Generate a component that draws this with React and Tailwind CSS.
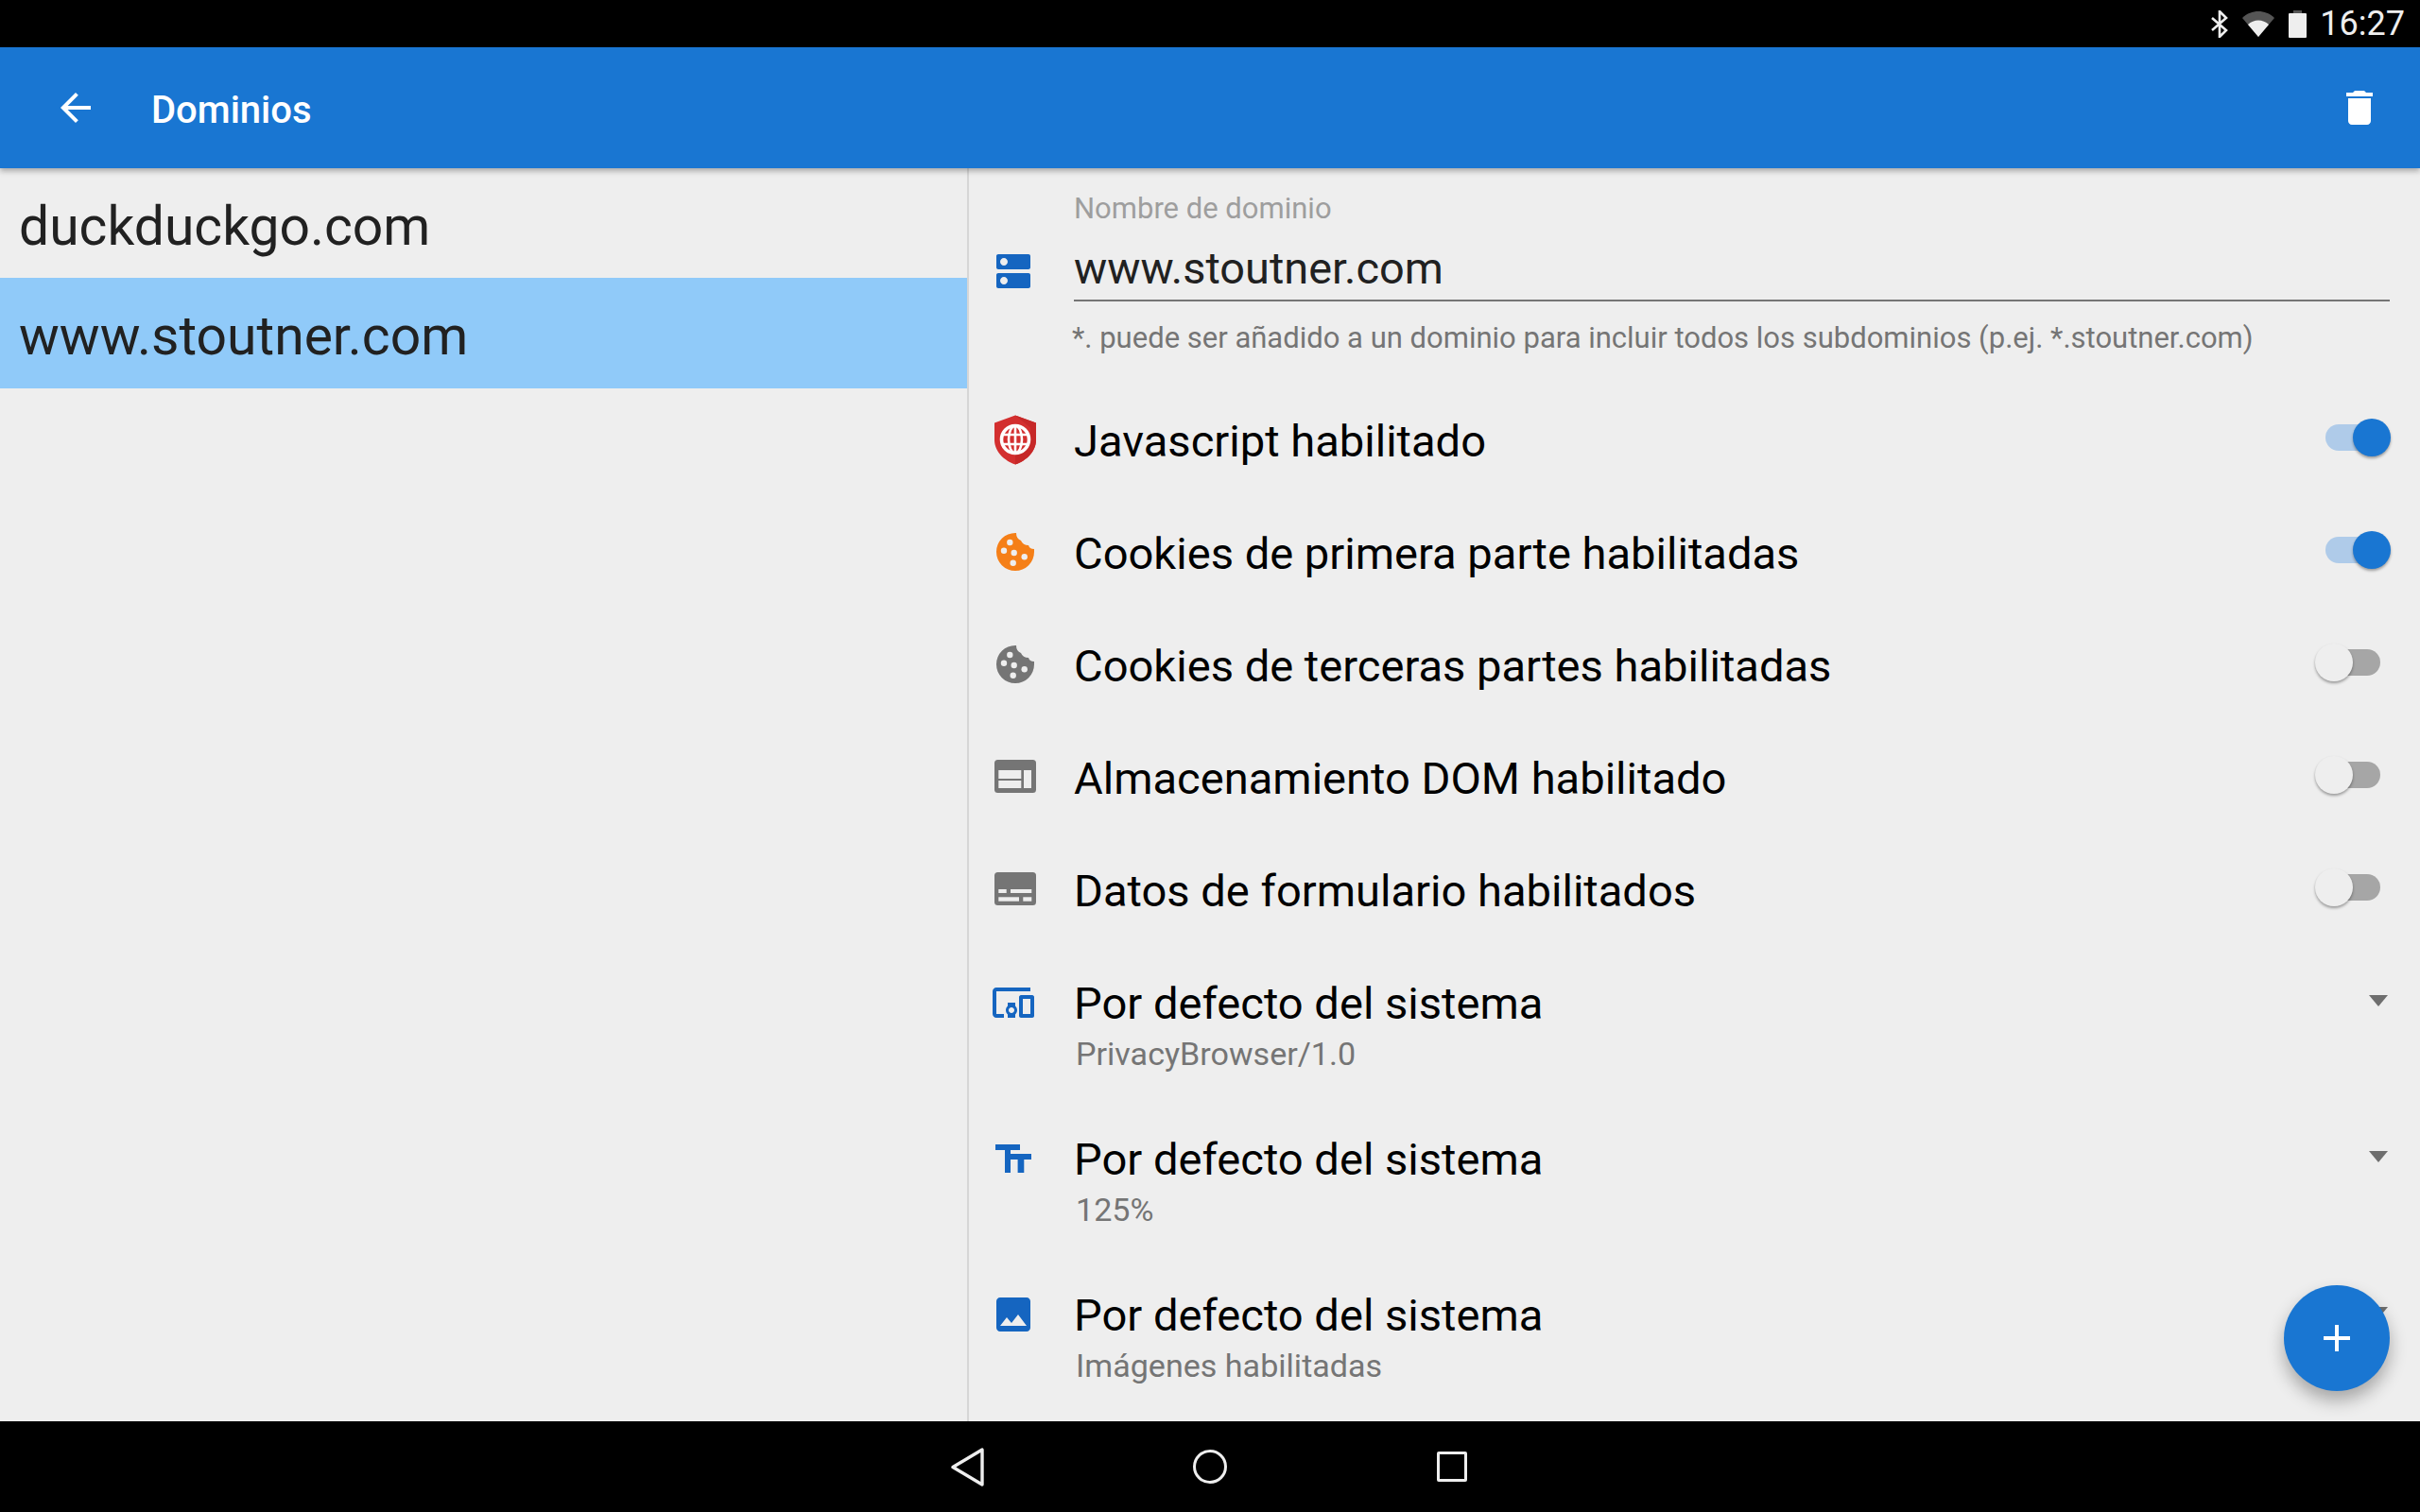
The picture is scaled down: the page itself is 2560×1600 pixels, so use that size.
function DnsIcon() {
    return (
        <svg viewBox="0 0 24 24" className="h-12 w-12" fill="#1565c0">
            <path d="M20 13H4c-.55 0-1 .45-1 1v6c0 .55.45 1 1 1h16c.55 0 1-.45 1-1v-6c0-.55-.45-1-1-1zM7 19c-1.1 0-2-.9-2-2s.9-2 2-2 2 .9 2 2-.9 2-2 2zM20 3H4c-.55 0-1 .45-1 1v6c0 .55.45 1 1 1h16c.55 0 1-.45 1-1V4c0-.55-.45-1-1-1zM7 9c-1.1 0-2-.9-2-2s.9-2 2-2 2 .9 2 2-.9 2-2 2z" />
        </svg>
    );
}

function ShieldIcon() {
    return (
        <svg viewBox="-2 -0.5 48 56" className="h-14 w-12">
            <path d="M24 2 L46 10 V28 C46 40 36 50 24 54 C12 50 2 40 2 28 V10 Z" fill="#d32f2f" />
            <path d="M24 2 L46 10 V28 C46 40 36 50 24 54 L24 42 L40 32 V15 Z" fill="#c62828" />
            <circle cx="24" cy="27.5" r="14.5" fill="none" stroke="#fff" strokeWidth="3.6" />
            <ellipse cx="24" cy="27.5" rx="7" ry="14.5" fill="none" stroke="#fff" strokeWidth="2.6" />
            <path d="M24 13v29M10 22.5h28M10 32.5h28" stroke="#fff" strokeWidth="2.6" fill="none" />
        </svg>
    );
}

function CookieIcon({ color }) {
    return (
        <svg viewBox="-2 0 48 48" className="h-12 w-12">
            <path d="M24 4 A20 20 0 1 0 44 24 L44 21 Q39 21 38 17 Q32 17 30 12 Q25 10 25 4 Z" fill={color} />
            <g fill="#eeeeee">
                <circle cx="18.3" cy="14" r="3.2" />
                <circle cx="12" cy="22.7" r="3.2" />
                <circle cx="22.7" cy="25" r="3.2" />
                <circle cx="33.7" cy="29.3" r="3.2" />
                <circle cx="21.7" cy="35.7" r="3.2" />
            </g>
        </svg>
    );
}

function StorageIcon() {
    return (
        <svg viewBox="-4 -6 48 48" className="h-12 w-12">
            <rect width="44" height="35" rx="3.5" fill="#757575" />
            <g fill="#eeeeee">
                <rect x="4.3" y="11" width="24" height="9" />
                <rect x="4.3" y="22" width="24" height="8" />
                <rect x="31" y="11" width="8" height="19" />
            </g>
        </svg>
    );
}

function FormIcon() {
    return (
        <svg viewBox="-4 -6 48 48" className="h-12 w-12">
            <rect width="44" height="35" rx="3.5" fill="#757575" />
            <g fill="#eeeeee">
                <rect x="4.3" y="18" width="8.4" height="4" />
                <rect x="17" y="18" width="22.3" height="4" />
                <rect x="4.3" y="26.3" width="21.7" height="4.4" />
                <rect x="30.3" y="26.3" width="9" height="4.4" />
            </g>
        </svg>
    );
}

function DevicesIcon() {
    return (
        <svg viewBox="0 0 24 24" className="h-12 w-12" fill="#1565c0">
            <path d="M3 6h18V4H3c-1.1 0-2 .9-2 2v12c0 1.1.9 2 2 2h4v-2H3V6zm10 6H9v1.78c-.61.55-1 1.33-1 2.22s.39 1.67 1 2.22V20h4v-1.78c.61-.55 1-1.34 1-2.22s-.39-1.67-1-2.22V12zm-2 5.5c-.83 0-1.5-.67-1.5-1.5s.67-1.5 1.5-1.5 1.5.67 1.5 1.5-.67 1.5-1.5 1.5zM22 8h-6c-.5 0-1 .5-1 1v10c0 .5.5 1 1 1h6c.5 0 1-.5 1-1V9c0-.5-.5-1-1-1zm-1 10h-4v-8h4v8z" />
        </svg>
    );
}

function TextSizeIcon() {
    return (
        <svg viewBox="-5 -9 48 48" className="h-12 w-12" fill="#1565c0">
            <path d="M0 0h26v6H16v24h-6V6H0z" />
            <path d="M16 10h22v6h-7.7v14h-6.7V16H16z" />
        </svg>
    );
}

function ImageIcon() {
    return (
        <svg viewBox="0 0 24 24" className="h-12 w-12" fill="#1565c0">
            <path d="M21 19V5c0-1.1-.9-2-2-2H5c-1.1 0-2 .9-2 2v14c0 1.1.9 2 2 2h14c1.1 0 2-.9 2-2zM8.5 13.5l2.5 3.01L14.5 12l4.5 6H5l3.5-4.5z" />
        </svg>
    );
}

function Toggle({ on }) {
    return (
        <div className={`relative mb-[3px] h-7 w-[58px] rounded-full ${on ? "bg-[#afcbe9]" : "bg-[#a6a6a6]"}`}>
            <div
                className={`absolute -top-1.5 h-10 w-10 rounded-full shadow-[0_2px_3px_rgba(0,0,0,0.35)] ${on ? "-right-[11px] bg-[#1976d2]" : "-left-[11px] bg-[#eeeeee]"}`}
            />
        </div>
    );
}

function ToggleRow({ icon, label, on }) {
    return (
        <div className="flex h-[119px] items-center pl-[23px] pr-[42px]">
            <div className="mr-10 flex h-12 w-12 items-center justify-center">{icon}</div>
            <span className="flex-1 pt-[5px] text-[47.1px] leading-none text-black">{label}</span>
            <Toggle on={on} />
        </div>
    );
}

function SpinnerRow({ icon, sub }) {
    return (
        <div className="flex h-[165px] items-start pl-[23px] pr-[34px] pt-9">
            <div className="mr-10 mt-px h-12 w-12">{icon}</div>
            <div className="flex-1">
                <p className="text-[47.1px] leading-[52px] text-black">Por defecto del sistema</p>
                <p className="mt-[2px] pl-[2px] text-[34.1px] leading-[50px] text-[#757575]">{sub}</p>
            </div>
            <div className="mt-[17px] h-0 w-0 border-x-[10px] border-t-[12px] border-x-transparent border-t-[#6e6e6e]" />
        </div>
    );
}

const toggles = [
    { label: "Javascript habilitado", on: true, icon: <ShieldIcon /> },
    { label: "Cookies de primera parte habilitadas", on: true, icon: <CookieIcon color="#f57f17" /> },
    { label: "Cookies de terceras partes habilitadas", on: false, icon: <CookieIcon color="#757575" /> },
    { label: "Almacenamiento DOM habilitado", on: false, icon: <StorageIcon /> },
    { label: "Datos de formulario habilitados", on: false, icon: <FormIcon /> },
];

const spinners = [
    { sub: "PrivacyBrowser/1.0", icon: <DevicesIcon /> },
    { sub: "125%", icon: <TextSizeIcon /> },
    { sub: "Imágenes habilitadas", icon: <ImageIcon /> },
];

function App() {
    return (
        <div className="relative flex h-[1600px] w-[2560px] flex-col overflow-hidden bg-[#eeeeee] font-['Roboto',sans-serif]">
            <div className="flex h-[50px] shrink-0 items-center justify-end bg-black pr-4">
                <svg viewBox="0 0 18 29" className="mr-[15px] h-[29px] w-[18px]" fill="none" stroke="#eeeeee" strokeWidth="2.6">
                    <path d="M1 8 L16 21 L9 28 V1 L16 8 L1 21" />
                </svg>
                <svg viewBox="0 0 34 28" className="mr-[15px] h-7 w-[34px]">
                    <path d="M17 28 L0 8 C5 3 11 1 17 1 C23 1 29 3 34 8 Z" fill="#555555" />
                    <path d="M17 28 L6 15 C9 12 13 10.5 17 10.5 C21 10.5 25 12 28 15 Z" fill="#eeeeee" />
                </svg>
                <svg viewBox="0 0 19 29" className="mr-[14px] h-[29px] w-[19px]">
                    <rect x="5" width="9" height="4" fill="#555555" />
                    <rect y="3" width="19" height="26" rx="1" fill="#eeeeee" />
                </svg>
                <span className="text-[36px] leading-none text-[#eeeeee]">16:27</span>
            </div>

            <header className="relative z-10 flex h-32 shrink-0 items-center bg-[#1976d2] pl-14 pr-10 shadow-[0_3px_6px_rgba(0,0,0,0.3)]">
                <svg viewBox="0 0 24 24" className="mr-[56px] h-12 w-12" fill="#ffffff">
                    <path d="M20 11H7.83l5.59-5.59L12 4l-8 8 8 8 1.41-1.41L7.83 13H20v-2z" />
                </svg>
                <h1 className="flex-1 pt-[6px] text-[40px] font-medium leading-none text-white">Dominios</h1>
                <svg viewBox="0 0 24 24" className="h-12 w-12" fill="#ffffff">
                    <path d="M6 19c0 1.1.9 2 2 2h8c1.1 0 2-.9 2-2V7H6v12zM19 4h-3.5l-1-1h-5l-1 1H5v2h14V4z" />
                </svg>
            </header>

            <main className="flex min-h-0 flex-1">
                <aside className="w-[1023px] shrink-0">
                    <div className="flex h-[116px] items-center pl-5 pt-[6px] text-[57px] leading-none text-[#212121]">duckduckgo.com</div>
                    <div className="flex h-[117px] items-center bg-[#90caf9] pl-5 pt-[6px] text-[57px] leading-none text-[#212121]">www.stoutner.com</div>
                </aside>
                <section className="min-w-0 flex-1 overflow-hidden border-l-2 border-[#d6d6d6]">
                    <div className="flex h-[227px] pl-[23px] pr-[32px] pt-[25px]">
                        <div className="mr-10 mt-[60px] h-12 w-12"><DnsIcon /></div>
                        <div className="flex-1">
                            <p className="text-[31px] leading-9 text-[#9e9e9e]">Nombre de dominio</p>
                            <p className="mt-4 border-b-2 border-[#757575] pb-[4px] text-[46.9px] leading-[58px] text-[#212121]">www.stoutner.com</p>
                            <p className="mt-[17px] -ml-[2px] text-[31px] leading-[44px] text-[#757575]">*. puede ser añadido a un dominio para incluir todos los subdominios (p.ej. *.stoutner.com)</p>
                        </div>
                    </div>
                    {toggles.map((row) => (
                        <ToggleRow key={row.label} icon={row.icon} label={row.label} on={row.on} />
                    ))}
                    {spinners.map((row) => (
                        <SpinnerRow key={row.sub} icon={row.icon} sub={row.sub} />
                    ))}
                </section>
            </main>

            <button className="absolute bottom-[128px] right-8 flex h-28 w-28 items-center justify-center rounded-full bg-[#1976d2] shadow-[0_10px_18px_rgba(0,0,0,0.3)]">
                <svg viewBox="0 0 28 28" className="h-7 w-7" fill="#ffffff">
                    <path d="M12 0h4v12h12v4H16v12h-4V16H0v-4h12z" />
                </svg>
            </button>

            <nav className="flex h-24 shrink-0 items-center bg-black pl-[1005px]">
                <svg viewBox="0 0 37 41" className="mr-[220px] h-[41px] w-[37px]" fill="none" stroke="#eeeeee" strokeWidth="3.4" strokeLinejoin="round">
                    <path d="M3 20.5 L34 2 V39 Z" />
                </svg>
                <div className="mr-[222px] h-[36px] w-[36px] rounded-full border-[3.5px] border-[#eeeeee]" />
                <div className="h-8 w-8 rounded-[2px] border-[3.5px] border-[#eeeeee]" />
            </nav>
        </div>
    );
}

export default App;
